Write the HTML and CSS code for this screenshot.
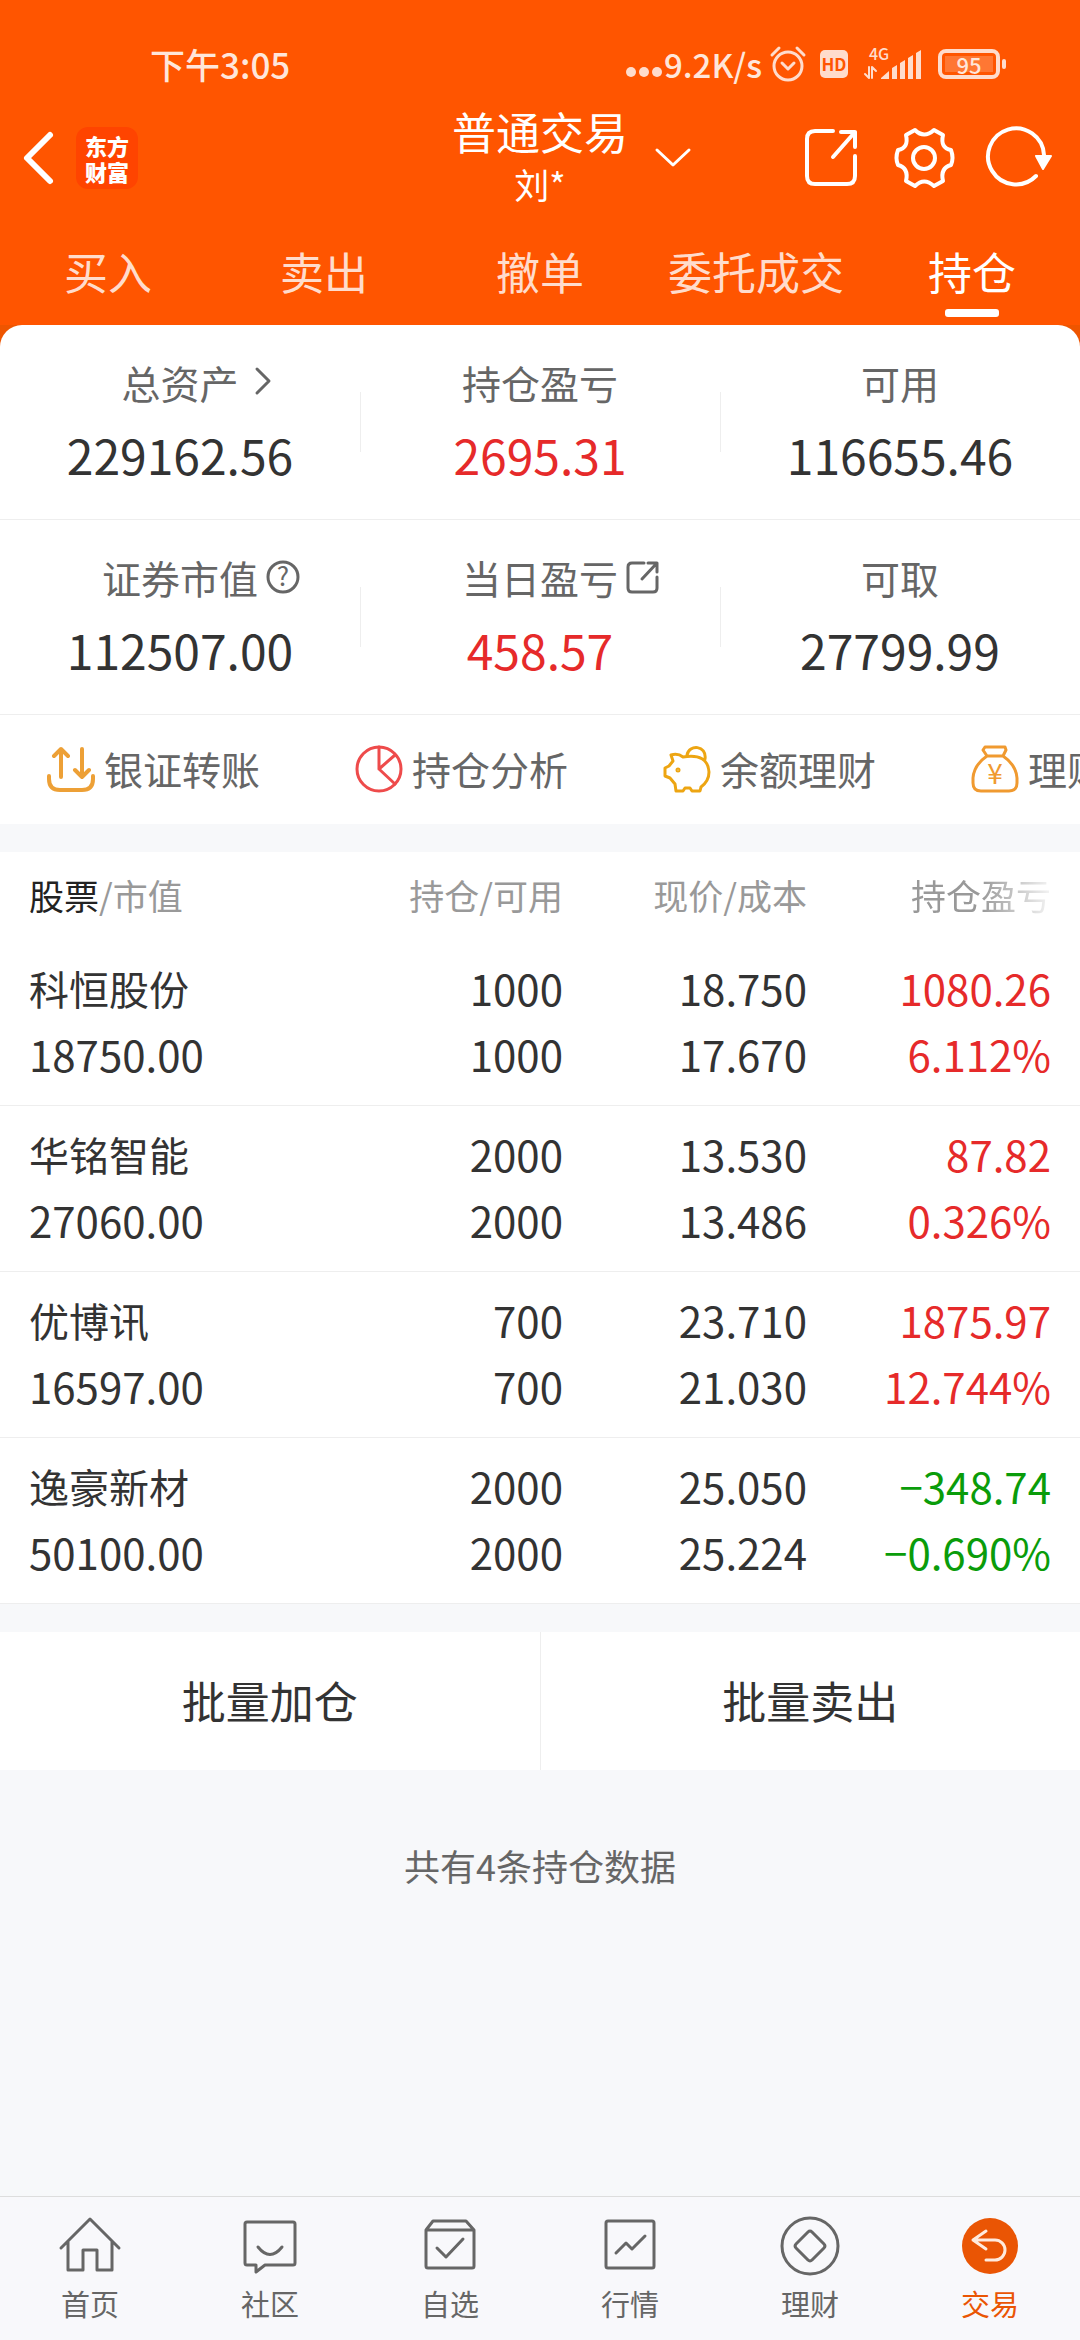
FILE: index.html
```
<!DOCTYPE html>
<html lang="zh-CN">
<head>
    <meta charset="UTF-8">
    <meta name="viewport" content="width=device-width, initial-scale=1.0">
    <title>普通交易 - 持仓</title>
    <link rel="stylesheet" href="styles.css">
</head>
<body>
    <header class="header">
        <div class="status-bar">
            <span class="time">下午3:05</span>
            <div class="status-icons">
                <svg class="dots" width="36" height="30" viewBox="0 0 36 30">
                    <circle cx="5" cy="23" r="5"/><circle cx="18" cy="23" r="5"/><circle cx="31" cy="23" r="5"/>
                </svg>
                <span class="speed">9.2K/s</span>
                <svg class="alarm" width="36" height="36" viewBox="0 0 36 36">
                    <circle cx="18" cy="20" r="14"/>
                    <path d="M12 17l6 6 6-6M2 9l7-7M34 9l-7-7"/>
                </svg>
                <span class="hd">HD</span>
                <svg class="signal" width="58" height="34" viewBox="0 0 58 34">
                    <text x="5" y="13">4G</text>
                    <path d="M1 27l4 4V20M12 24l-4-4v11" fill="none" stroke="#ffdccc" stroke-width="2"/>
                    <path d="M17 32v-1l8-7v8zM28 32V21l5-3v14zM36 32V16l5-3v19zM44 32V11l5-3v24zM52 32V6l5-3v29z"/>
                </svg>
                <div class="battery"><span>95</span></div>
            </div>
        </div>

        <div class="nav-bar">
            <div class="nav-left">
                <button class="icon-btn" aria-label="返回">
                    <svg width="31" height="54" viewBox="3 0 31 54">
                        <path d="M28 4L5 27l23 23" stroke-width="6"/>
                    </svg>
                </button>
                <a class="logo" href="#">东方<br>财富</a>
            </div>
            <h1 class="title">普通交易<small>刘*</small></h1>
            <div class="nav-right">
                <button class="icon-btn switch" aria-label="切换账户">
                    <svg width="34" height="20" viewBox="0 0 34 20">
                        <path d="M1 2l16 15L33 2" stroke-width="3"/>
                    </svg>
                </button>
                <button class="icon-btn" aria-label="分享">
                    <svg width="60" height="60" viewBox="0 0 60 60">
                        <path d="M31 3H13Q5 3 5 11v37q0 8 8 8h32q8 0 8-8V28M39 4h14v15M53 4L31 29" stroke-width="4"/>
                    </svg>
                </button>
                <button class="icon-btn" aria-label="设置">
                    <svg width="60" height="60" viewBox="0 0 60 60">
                        <path d="M21 2L12 7Q15 20 4 22Q1 30 4 37Q15 40 12 53L21 58Q30 49 40 58L49 53Q46 40 57 37Q60 30 57 22Q46 20 49 7L40 2Q30 11 21 2z" stroke-width="4"/>
                        <circle cx="30" cy="30" r="11" stroke-width="4"/>
                    </svg>
                </button>
                <button class="icon-btn" aria-label="刷新">
                    <svg width="69" height="60" viewBox="0 0 69 60">
                        <path d="M50 48A28 28 0 1 1 58 27" stroke-width="4"/>
                        <path d="M50 28h15l-8 13z" fill="#fff" stroke-width="2"/>
                    </svg>
                </button>
            </div>
        </div>

        <nav class="tabs">
            <a href="#">买入</a>
            <a href="#">卖出</a>
            <a href="#">撤单</a>
            <a href="#">委托成交</a>
            <a href="#" class="active">持仓</a>
        </nav>
    </header>

    <main>
        <section class="summary">
            <div class="card">
                <div class="summary-row">
                    <div class="item">
                        <div class="label">总资产
                            <svg class="more" width="16" height="28" viewBox="0 0 16 28"><path d="M2 2l12 12L2 26"/></svg>
                        </div>
                        <div class="value">229162.56</div>
                    </div>
                    <div class="item">
                        <div class="label">持仓盈亏</div>
                        <div class="value up">2695.31</div>
                    </div>
                    <div class="item">
                        <div class="label">可用</div>
                        <div class="value">116655.46</div>
                    </div>
                </div>
                <div class="summary-row">
                    <div class="item">
                        <div class="label">证券市值
                            <svg width="34" height="34" viewBox="0 0 34 34"><circle cx="17" cy="17" r="15"/><text x="17" y="26" text-anchor="middle">?</text></svg>
                        </div>
                        <div class="value">112507.00</div>
                    </div>
                    <div class="item">
                        <div class="label">当日盈亏
                            <svg width="34" height="34" viewBox="0 0 34 34"><path d="M18 3H6Q2 3 2 7v21q0 4 4 4h21q4 0 4-4V17M22 3h9v9M31 3L16 19"/></svg>
                        </div>
                        <div class="value up">458.57</div>
                    </div>
                    <div class="item">
                        <div class="label">可取</div>
                        <div class="value">27799.99</div>
                    </div>
                </div>
                <div class="shortcuts">
                    <a href="#">
                        <svg width="48" height="48" viewBox="0 0 48 48" stroke="#eda036" stroke-width="4">
                            <path d="M14 32V4M7 11l7-7 7 7M35 4v28M28 25l7 7 7-7M2 31v3q0 11 11 11h22q11 0 11-11v-3"/>
                        </svg>
                        银证转账
                    </a>
                    <a href="#">
                        <svg width="48" height="48" viewBox="0 0 48 48" stroke="#ee4b4b" stroke-width="3">
                            <circle cx="24" cy="24" r="22"/><path d="M24 2v22l16-14M24 24l16 15"/>
                        </svg>
                        持仓分析
                    </a>
                    <a href="#">
                        <svg width="48" height="48" viewBox="0 0 48 48" stroke="#eda512" stroke-width="3">
                            <path d="M8 10Q15 8 20 12Q45 8 46 27Q46 36 38 42L37 46H29L27 43H22L20 46H13L12 39L7 33L2 31V23L6 21L10 16zM24 10C26-1 44 0 42 14"/>
                            <circle cx="15" cy="25" r="1"/>
                        </svg>
                        余额理财
                    </a>
                    <a href="#">
                        <svg width="48" height="48" viewBox="0 0 48 48" stroke="#f09a30" stroke-width="3">
                            <path d="M14 2H34L35 5L32 11H16L12 5zM16 11Q3 20 2 33V38Q2 46 10 46H38Q46 46 46 38V33Q45 20 32 11"/>
                            <text x="24" y="39" text-anchor="middle" fill="#f09a30" stroke="none">¥</text>
                        </svg>
                        理财产品
                    </a>
                </div>
            </div>
        </section>

        <table class="holdings">
            <thead>
                <tr>
                    <th><b>股票</b>/市值</th>
                    <th class="col-qty">持仓/可用</th>
                    <th class="col-price">现价/成本</th>
                    <th class="col-profit"><span class="fade">持仓盈亏</span></th>
                </tr>
            </thead>
            <tbody>
                <tr>
                    <td><span class="name">科恒股份</span>18750.00</td>
                    <td>1000<br>1000</td>
                    <td>18.750<br>17.670</td>
                    <td class="up">1080.26<br>6.112%</td>
                </tr>
                <tr>
                    <td><span class="name">华铭智能</span>27060.00</td>
                    <td>2000<br>2000</td>
                    <td>13.530<br>13.486</td>
                    <td class="up">87.82<br>0.326%</td>
                </tr>
                <tr>
                    <td><span class="name">优博讯</span>16597.00</td>
                    <td>700<br>700</td>
                    <td>23.710<br>21.030</td>
                    <td class="up">1875.97<br>12.744%</td>
                </tr>
                <tr>
                    <td><span class="name">逸豪新材</span>50100.00</td>
                    <td>2000<br>2000</td>
                    <td>25.050<br>25.224</td>
                    <td class="down">−348.74<br>−0.690%</td>
                </tr>
            </tbody>
        </table>

        <div class="batch">
            <button>批量加仓</button>
            <button>批量卖出</button>
        </div>

        <p class="total">共有4条持仓数据</p>
    </main>

    <nav class="bottom-nav">
        <a href="#">
            <svg width="60" height="60" viewBox="0 0 60 60"><path d="M1 31L30 2l29 29M8 25v28h15V33h14v20h15V25"/></svg>
            首页
        </a>
        <a href="#">
            <svg width="60" height="60" viewBox="0 0 60 60"><path d="M7 5h46q2 0 2 2v39q0 2-2 2H25l-9 7v-7H7q-2 0-2-2V7q0-2 2-2z"/><path d="M18 30q12 15 24 0"/></svg>
            社区
        </a>
        <a href="#">
            <svg width="60" height="60" viewBox="0 0 60 60"><path d="M6 13l7-9h33l8 9v36q0 2-2 2H8q-2 0-2-2zh48M17 31l9 9 17-18"/></svg>
            自选
        </a>
        <a href="#">
            <svg width="60" height="60" viewBox="0 0 60 60"><rect x="6" y="4" width="48" height="47" rx="2"/><path d="M16 36l10-10 6 6 13-13"/></svg>
            行情
        </a>
        <a href="#">
            <svg width="60" height="60" viewBox="0 0 60 60"><circle cx="30" cy="29" r="28"/><path d="M28 15q2-2 4 0l12 12q2 2 0 4L32 43q-2 2-4 0L16 31q-2-2 0-4z"/></svg>
            理财
        </a>
        <a href="#" class="active">
            <svg width="60" height="60" viewBox="0 0 60 60"><circle cx="30" cy="29" r="28" fill="#ea5504"/><path d="M26 14l-13 9 13 9M13 23h22a10 10 0 0 1 0 20h-9" stroke="#ffeadd"/></svg>
            交易
        </a>
    </nav>
</body>
</html>
```
FILE: styles.css
```
/* Base styles */
* {
    margin: 0;
    padding: 0;
    box-sizing: border-box;
}

body {
    display: flex;
    flex-direction: column;
    min-height: 100vh;
    font-family: "Noto Sans CJK SC", sans-serif;
    background-color: #f7f8fa;
    color: #333;
}

a {
    color: inherit;
    text-decoration: none;
}

button {
    font: inherit;
    color: inherit;
    background: none;
    border: none;
    cursor: pointer;
}

svg {
    display: block;
    flex: none;
    overflow: visible;
    fill: none;
    stroke-linecap: round;
    stroke-linejoin: round;
}

.up {
    color: #e62a2a;
}

.down {
    color: #0a9c0a;
}

/* Header */
.header {
    background-color: #ff5500;
    color: #fff;
}

.status-bar {
    display: flex;
    align-items: center;
    justify-content: space-between;
    height: 102px;
    padding: 25px 74px 0 150px;
    color: #ffe6da;
    font-size: 35px;
    font-weight: 500;
    line-height: 40px;
}

.status-icons {
    display: flex;
    align-items: center;
}

.dots {
    fill: #ffdccc;
}

.speed {
    margin: 0 8px 0 2px;
    font-size: 33px;
}

.alarm {
    stroke: #ffdccc;
    stroke-width: 3;
}

.hd {
    width: 28px;
    margin: 0 16px 0 14px;
    border-radius: 5px;
    background-color: #ffdccc;
    color: #ff5500;
    font-size: 17px;
    font-weight: 700;
    line-height: 28px;
    text-align: center;
}

.signal {
    margin-right: 16px;
    fill: #ffdccc;
    font-size: 16px;
}

.battery {
    position: relative;
    width: 62px;
    height: 30px;
    margin-right: 6px;
    padding: 3px;
    border: 4px solid #ffdccc;
    border-radius: 8px;
}

.battery span {
    display: block;
    background-color: #ff7733;
    font-size: 22px;
    line-height: 16px;
    text-align: center;
}

.battery::after {
    content: "";
    position: absolute;
    right: -10px;
    top: 6px;
    width: 4px;
    height: 10px;
    border-radius: 2px;
    background-color: #ffdccc;
}

.nav-bar {
    display: grid;
    grid-template-columns: 1fr auto 1fr;
    align-items: center;
    height: 112px;
    padding: 0 25px;
}

.nav-left,
.nav-right {
    display: flex;
    align-items: center;
}

.nav-left {
    gap: 20px;
}

.nav-right {
    gap: 32px;
}

.icon-btn svg {
    stroke: #fff;
}

.switch {
    margin: 0 auto 0 28px;
}

.logo {
    width: 62px;
    padding: 5px 0;
    border-radius: 12px;
    background-color: #ff4400;
    font-size: 22px;
    font-weight: 900;
    line-height: 26px;
    text-align: center;
}

.title {
    padding: 2px 0 4px;
    font-size: 44px;
    font-weight: 400;
    line-height: 54px;
    text-align: center;
}

.title small {
    display: block;
    font-size: 35px;
    line-height: 52px;
}

.tabs {
    display: flex;
    padding: 27px 0 8px;
}

.tabs a {
    flex: 1;
    color: #ffdccc;
    font-size: 44px;
    line-height: 60px;
    text-align: center;
}

.tabs a::after {
    content: "";
    display: block;
    width: 54px;
    height: 8px;
    margin: 8px auto 0;
    border-radius: 3px;
}

.tabs .active {
    color: #fff;
}

.tabs .active::after {
    background-color: #fff;
}

/* Account summary */
.summary {
    background-color: #ee5500;
}

.card {
    border-radius: 22px 22px 0 0;
    background-color: #fff;
}

.summary-row {
    display: flex;
    border-bottom: 1px solid #eee;
}

.item {
    position: relative;
    flex: 1;
    padding: 27px 0 23px;
    text-align: center;
}

.item + .item::before {
    content: "";
    position: absolute;
    left: 0;
    top: 67px;
    bottom: 67px;
    width: 1px;
    background-color: #eee;
}

.label {
    position: relative;
    display: inline-block;
    color: #666;
    font-size: 39px;
    line-height: 60px;
    vertical-align: top;
}

/* icons hang off the label so the text stays centred */
.label svg {
    position: absolute;
    left: 100%;
    top: 13px;
    margin-left: 8px;
    stroke: #666;
    stroke-width: 3;
}

.label .more {
    top: 15px;
    margin-left: 16px;
}

.label text {
    fill: #666;
    stroke: none;
    font-size: 26px;
}

.value {
    font-size: 48px;
    line-height: 84px;
}

.shortcuts {
    display: flex;
    overflow: hidden;
    padding: 0 0 2px 47px;
}

.shortcuts a {
    display: flex;
    flex: 0 0 308px;
    align-items: center;
    gap: 9px;
    color: #666;
    font-size: 39px;
    line-height: 107px;
    white-space: nowrap;
}

.shortcuts text {
    font-size: 28px;
}

/* Holdings table */
.holdings {
    width: 100%;
    margin-top: 28px;
    border-collapse: collapse;
    table-layout: fixed;
    background-color: #fff;
}

.holdings th {
    padding-bottom: 2px;
    color: #999;
    font-size: 35px;
    font-weight: 400;
    line-height: 86px;
    text-align: right;
}

.holdings th b {
    color: #222;
    font-weight: 400;
}

.holdings td {
    padding: 15px 0 18px;
    border-bottom: 1px solid #eee;
    font-size: 42px;
    line-height: 66px;
    text-align: right;
}

.holdings th:first-child,
.holdings td:first-child {
    padding-left: 29px;
    text-align: left;
}

.holdings th:last-child,
.holdings td:last-child {
    padding-right: 29px;
}

.name {
    display: block;
    font-size: 40px;
}

.col-qty {
    width: 240px;
}

.col-price {
    width: 244px;
}

.col-profit {
    width: 273px;
}

.fade {
    -webkit-mask-image: linear-gradient(to right, #000 50%, rgba(0,0,0,0.1));
    mask-image: linear-gradient(to right, #000 50%, rgba(0,0,0,0.1));
}

/* Batch actions */
.batch {
    display: flex;
    margin-top: 28px;
    background-color: #fff;
}

.batch button {
    flex: 1;
    padding-bottom: 2px;
    font-size: 44px;
    line-height: 136px;
}

.batch button + button {
    border-left: 1px solid #eee;
}

.total {
    padding: 68px 0;
    color: #666;
    font-size: 36px;
    line-height: 54px;
    text-align: center;
}

/* Bottom navigation */
.bottom-nav {
    display: flex;
    margin-top: auto;
    padding: 20px 0 17px;
    border-top: 1px solid #ddd;
    background-color: #f8f8fb;
}

.bottom-nav a {
    display: flex;
    flex: 1;
    flex-direction: column;
    align-items: center;
    gap: 6px;
    color: #666;
    font-size: 29px;
    line-height: 40px;
}

.bottom-nav svg {
    stroke: #666;
    stroke-width: 3;
}

.bottom-nav .active {
    color: #ea5504;
}

.bottom-nav .active svg {
    stroke: none;
}
```
